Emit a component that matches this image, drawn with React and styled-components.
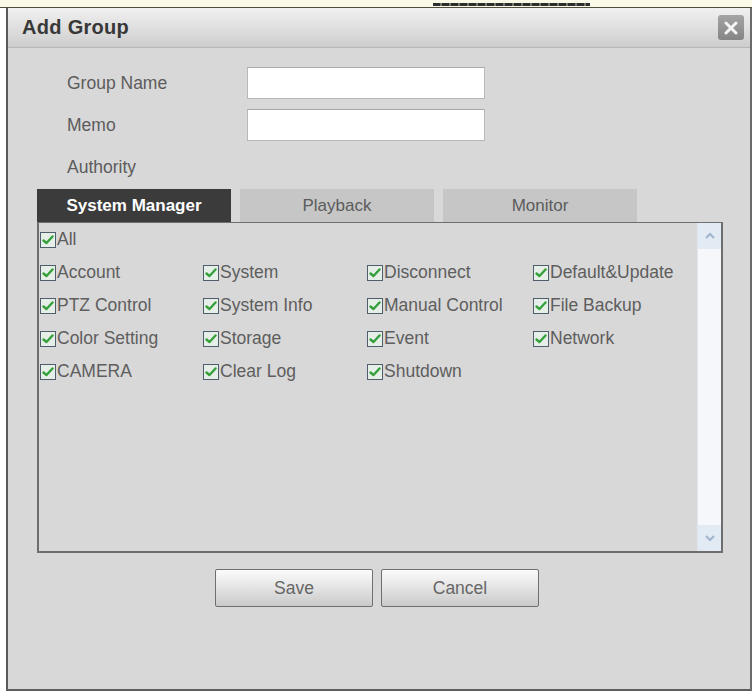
import React from "react";
import styled, { createGlobalStyle } from "styled-components";

const Global = createGlobalStyle`
  html, body { margin: 0; padding: 0; background: #ffffff; }
  body { font-family: "Liberation Sans", Arial, sans-serif; }
  * { box-sizing: border-box; }
`;

const Page = styled.div`
  width: 756px;
  height: 692px;
  display: flex;
  flex-direction: column;
`;

const TopStrip = styled.div`
  width: 752px;
  height: 8px;
  background: #fbf9e8;
  border-bottom: 1px solid #4f4d3a;
  padding-left: 433px;
  padding-top: 3px;
`;

const Crumb = styled.div`
  width: 157px;
  height: 3px;
  background: repeating-linear-gradient(
    90deg,
    #2e2e2e 0 7px,
    #77776e 7px 9px
  );
`;

const Dialog = styled.div`
  margin-left: 6px;
  width: 746px;
  height: 683px;
  background: #d8d8d8;
  border-left: 2px solid #5a5a5a;
  border-right: 2px solid #6a6a6a;
  border-bottom: 2px solid #5e5e5e;
  display: flex;
  flex-direction: column;
`;

const TitleBar = styled.div`
  height: 40px;
  display: flex;
  align-items: center;
  justify-content: space-between;
  padding: 0 6px 0 14px;
  background: linear-gradient(#f0f0f0, #dcdcdc 60%, #cdcdcd);
  border-bottom: 1px solid #b8b8b8;
`;

const Title = styled.div`
  font-size: 20px;
  font-weight: bold;
  color: #383838;
  letter-spacing: 0.3px;
`;

const CloseButton = styled.div`
  width: 26px;
  height: 25px;
  border-radius: 3px;
  background: linear-gradient(#a4a4a4, #858585);
  display: flex;
  align-items: center;
  justify-content: center;
`;

const Body = styled.div`
  flex: 1;
  display: flex;
  flex-direction: column;
  padding: 19px 0 0 29px;
`;

const FormRow = styled.div`
  height: 32px;
  margin-bottom: 10px;
  display: flex;
  align-items: center;
  padding-left: 30px;
`;

const Label = styled.div`
  width: 180px;
  font-size: 17.5px;
  color: #5c5c5c;
`;

const TextInput = styled.input`
  width: 238px;
  height: 32px;
  border: 1px solid #b8b8b8;
  border-top-color: #a8a8a8;
  background: #ffffff;
  outline: none;
  font-family: inherit;
`;

const Tabs = styled.div`
  display: flex;
  gap: 9px;
  margin-top: -4px;
`;

const Tab = styled.div`
  width: 194px;
  height: 33px;
  display: flex;
  align-items: center;
  justify-content: center;
  font-size: 17px;
  background: ${(p) => (p.$active ? "#3b3b3b" : "#c6c6c6")};
  color: ${(p) => (p.$active ? "#ffffff" : "#5c5c5c")};
  font-weight: ${(p) => (p.$active ? "bold" : "normal")};
`;

const Panel = styled.div`
  width: 686px;
  height: 331px;
  border: 2px solid #6e6e6e;
  border-top-width: 1px;
  display: flex;
`;

const List = styled.div`
  flex: 1;
  display: grid;
  grid-template-columns: 163px 164px 166px 1fr;
  grid-auto-rows: 33px;
  align-content: start;
  padding: 0 0 0 1px;
`;

const Item = styled.label`
  display: flex;
  align-items: center;
  gap: 1px;
  font-size: 17.5px;
  color: #5e5e5e;
  white-space: nowrap;
  grid-column: ${(p) => (p.$full ? "1 / -1" : "auto")};
`;

const Box = styled.span`
  width: 16px;
  height: 16px;
  border: 1px solid #4f5d6c;
  background: #e6eee8;
  display: flex;
  align-items: center;
  justify-content: center;
  flex: none;
`;

const Scrollbar = styled.div`
  width: 24px;
  display: flex;
  flex-direction: column;
  background: #f5f7fb;
  border-left: 1px solid #e2e6ee;
`;

const ScrollButton = styled.div`
  height: 26px;
  display: flex;
  align-items: center;
  justify-content: center;
  background: #e2eaf4;
`;

const Track = styled.div`
  flex: 1;
`;

const Actions = styled.div`
  width: 686px;
  display: flex;
  gap: 8px;
  margin-top: 16px;
  padding-left: 178px;
`;

const Button = styled.button`
  width: 158px;
  height: 38px;
  border: 1px solid #6f6f6f;
  border-radius: 2px;
  background: linear-gradient(#fbfbfb, #e6e6e6 45%, #c9c9c9);
  font-family: inherit;
  font-size: 17.5px;
  color: #666666;
  padding: 0;
`;

const Check = () => (
  <svg width="12" height="10" viewBox="0 0 12 10">
    <polyline
      points="1.5,5.5 4.5,8 10.5,1.5"
      fill="none"
      stroke="#34a03a"
      strokeWidth="2.4"
      strokeLinecap="round"
      strokeLinejoin="round"
    />
  </svg>
);

const Chevron = ({ up }) => (
  <svg width="12" height="8" viewBox="0 0 12 8">
    <polyline
      points={up ? "2,6 6,2 10,6" : "2,2 6,6 10,2"}
      fill="none"
      stroke="#9fb6cf"
      strokeWidth="2"
    />
  </svg>
);

const rights = [
  "Account", "System", "Disconnect", "Default&Update",
  "PTZ Control", "System Info", "Manual Control", "File Backup",
  "Color Setting", "Storage", "Event", "Network",
  "CAMERA", "Clear Log", "Shutdown",
];

const CheckItem = ({ text, full }) => (
  <Item $full={full}>
    <Box>
      <Check />
    </Box>
    {text}
  </Item>
);

export default function App() {
  return (
    <Page>
      <Global />
      <TopStrip>
        <Crumb />
      </TopStrip>
      <Dialog>
        <TitleBar>
          <Title>Add Group</Title>
          <CloseButton>
            <svg width="14" height="14" viewBox="0 0 14 14">
              <path d="M2 2 L12 12 M12 2 L2 12" stroke="#f4f4f4" strokeWidth="3" strokeLinecap="round" />
            </svg>
          </CloseButton>
        </TitleBar>
        <Body>
          <FormRow>
            <Label>Group Name</Label>
            <TextInput />
          </FormRow>
          <FormRow>
            <Label>Memo</Label>
            <TextInput />
          </FormRow>
          <FormRow>
            <Label>Authority</Label>
          </FormRow>
          <Tabs>
            <Tab $active>System Manager</Tab>
            <Tab>Playback</Tab>
            <Tab>Monitor</Tab>
          </Tabs>
          <Panel>
            <List>
              <CheckItem text="All" full />
              {rights.map((r) => (
                <CheckItem key={r} text={r} />
              ))}
            </List>
            <Scrollbar>
              <ScrollButton>
                <Chevron up />
              </ScrollButton>
              <Track />
              <ScrollButton>
                <Chevron />
              </ScrollButton>
            </Scrollbar>
          </Panel>
          <Actions>
            <Button>Save</Button>
            <Button>Cancel</Button>
          </Actions>
        </Body>
      </Dialog>
    </Page>
  );
}
